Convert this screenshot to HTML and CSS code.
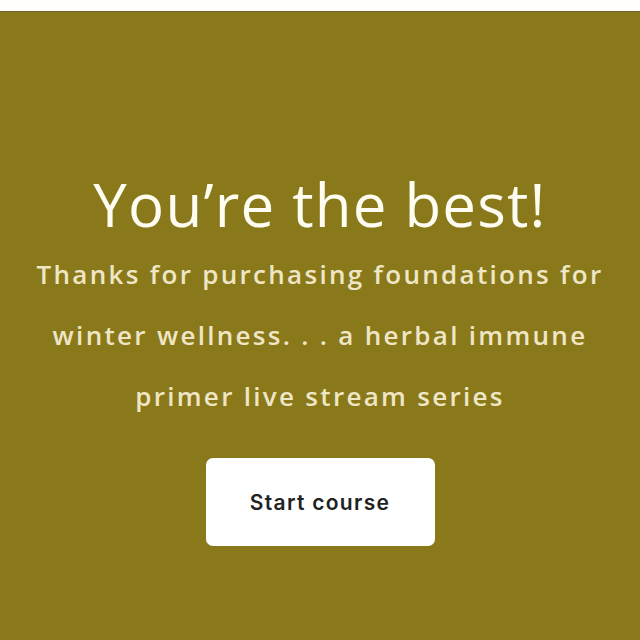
FILE: index.html
```html
<!DOCTYPE html>
<html>
<head>
<meta charset="utf-8">
<link rel="stylesheet" href="styles.css">
</head>
<body>
<div class="topbar"></div>
<main class="hero">
  <h1 class="title">You’re the best!</h1>
  <p class="subtitle">Thanks for purchasing foundations for<br>winter wellness. . . a herbal immune<br>primer live stream series</p>
  <a class="btn" href="#">Start course</a>
</main>
</body>
</html>
```
FILE: styles.css
```css
html, body {
  margin: 0;
  padding: 0;
  height: 100%;
}
body {
  background: #89791a;
  display: flex;
  flex-direction: column;
}
.topbar {
  height: 11px;
  background: #fffefa;
  border-bottom: 1px solid #6e6534;
  flex: none;
}
.hero {
  flex: 1;
  display: flex;
  flex-direction: column;
  align-items: center;
  padding-top: 157px;
}
.title {
  margin: 0;
  font-family: "Open Sans", sans-serif;
  font-weight: 400;
  font-size: 60px;
  letter-spacing: 1.2px;
  line-height: 70px;
  color: #fffdf2;
}
.subtitle {
  margin: 5px 0 0;
  width: 640px;
  text-align: center;
  font-family: "Open Sans", sans-serif;
  font-weight: 600;
  font-size: 26px;
  letter-spacing: 2.3px;
  line-height: 61px;
  color: #efe6c6;
}
.btn {
  margin-top: 31px;
  width: 229px;
  height: 88px;
  display: flex;
  align-items: center;
  justify-content: center;
  background: #ffffff;
  border-radius: 7px;
  font-family: "Inter", sans-serif;
  font-weight: 600;
  font-size: 21px;
  letter-spacing: 1.3px;
  color: #222222;
  text-decoration: none;
}
```
